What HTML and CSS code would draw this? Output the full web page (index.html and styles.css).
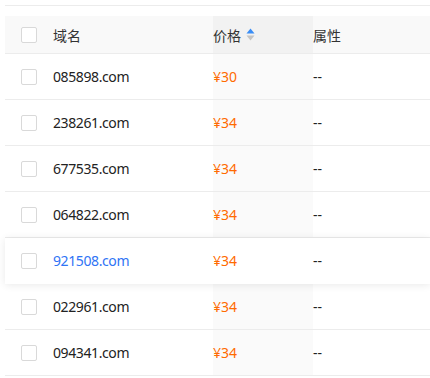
FILE: index.html
```html
<!DOCTYPE html>
<html lang="zh-CN">
<head>
    <meta charset="UTF-8">
    <meta name="viewport" content="width=device-width, initial-scale=1.0">
    <title>域名列表</title>
    <link rel="stylesheet" href="styles.css">
</head>
<body>
    <div class="domain-table">
        <div class="table-head">
            <div class="cell cell-check"><span class="checkbox"></span></div>
            <div class="cell">域名</div>
            <div class="cell cell-sorted">
                价格
                <svg class="sort-icon" width="9" height="13" viewBox="0 0 9 13">
                    <path d="M4.5 0.5 L8.5 5.5 L0.5 5.5 Z" fill="#3a8ef6"/>
                    <path d="M0.5 7.5 L8.5 7.5 L4.5 12.5 Z" fill="#c4c4c4"/>
                </svg>
            </div>
            <div class="cell">属性</div>
        </div>

        <div class="table-row">
            <div class="cell cell-check"><span class="checkbox"></span></div>
            <div class="cell domain">085898.com</div>
            <div class="cell cell-sorted price">¥30</div>
            <div class="cell">--</div>
        </div>
        <div class="table-row">
            <div class="cell cell-check"><span class="checkbox"></span></div>
            <div class="cell domain">238261.com</div>
            <div class="cell cell-sorted price">¥34</div>
            <div class="cell">--</div>
        </div>
        <div class="table-row">
            <div class="cell cell-check"><span class="checkbox"></span></div>
            <div class="cell domain">677535.com</div>
            <div class="cell cell-sorted price">¥34</div>
            <div class="cell">--</div>
        </div>
        <div class="table-row">
            <div class="cell cell-check"><span class="checkbox"></span></div>
            <div class="cell domain">064822.com</div>
            <div class="cell cell-sorted price">¥34</div>
            <div class="cell">--</div>
        </div>
        <div class="table-row is-hover">
            <div class="cell cell-check"><span class="checkbox"></span></div>
            <div class="cell domain domain-link">921508.com</div>
            <div class="cell cell-sorted price">¥34</div>
            <div class="cell">--</div>
        </div>
        <div class="table-row">
            <div class="cell cell-check"><span class="checkbox"></span></div>
            <div class="cell domain">022961.com</div>
            <div class="cell cell-sorted price">¥34</div>
            <div class="cell">--</div>
        </div>
        <div class="table-row">
            <div class="cell cell-check"><span class="checkbox"></span></div>
            <div class="cell domain">094341.com</div>
            <div class="cell cell-sorted price">¥34</div>
            <div class="cell">--</div>
        </div>
    </div>
</body>
</html>
```

FILE: styles.css
```css
body {
    margin: 0;
    background: #fff;
    font-family: "Noto Sans", "Noto Sans CJK SC", sans-serif;
    font-size: 14px;
    color: #222;
    overflow: hidden;
}
.domain-table {
    margin: 5px 0 0 5px;
    border-top: 1px solid #ececec;
    padding-top: 10px;
}
.table-head,
.table-row {
    display: grid;
    grid-template-columns: 48px 160px 100px 1fr;
    align-items: stretch;
    border-bottom: 1px solid #ececec;
}
.table-head {
    height: 37px;
    background: #f9f9f9;
    color: #333;
}
.table-row {
    height: 45px;
    background: #fff;
}
.cell {
    display: flex;
    align-items: center;
    white-space: nowrap;
}
.cell-check {
    padding-left: 16px;
}
.checkbox {
    display: block;
    width: 14px;
    height: 14px;
    border: 1px solid #d9d9d9;
    border-radius: 2px;
    background: #fff;
}
.domain {
    letter-spacing: -0.4px;
}
.table-head .cell-sorted {
    background: #f2f2f2;
}
.table-row .cell-sorted {
    background: #fafafa;
}
.sort-icon {
    margin-left: 5px;
}
.price {
    color: #ff6a00;
}
.domain-link {
    color: #2f74f5;
}
.table-row.is-hover {
    position: relative;
    z-index: 1;
    border-bottom-color: transparent;
    box-shadow: 0 1px 8px rgba(0, 0, 0, 0.09);
}
.table-row.is-hover .cell-sorted {
    background: #fff;
}
```
